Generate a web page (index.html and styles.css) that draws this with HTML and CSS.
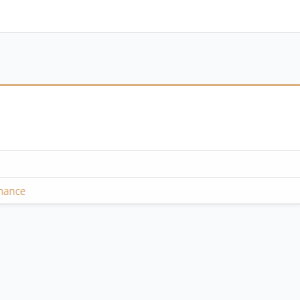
FILE: index.html
```html
<!DOCTYPE html>
<html lang="en">
<head>
    <meta charset="UTF-8">
    <link rel="stylesheet" href="styles.css">
    <title>Settings</title>
</head>
<body>
    <div class="topbar"></div>
    <div class="toolbar"></div>
    <div class="panel">
        <div class="panel-body"></div>
        <div class="row"></div>
        <div class="row row-link"><span class="link">Maintenance</span></div>
    </div>
    <div class="page-bg"></div>
</body>
</html>
```

FILE: styles.css
```css
html, body {
    margin: 0;
    padding: 0;
    height: 100%;
}

body {
    font-family: "Open Sans", "Liberation Sans", sans-serif;
    font-size: 10px;
    color: #333;
    background: #f9fafb;
    overflow: hidden;
}

.topbar {
    height: 32px;
    background: #fff;
    border-bottom: 1px solid #e8e8e8;
}

.toolbar {
    height: 51px;
    background: #f9fafb;
    border-bottom: 2px solid #dcb07f;
}

.panel {
    background: #fff;
    border-bottom: 1px solid #ececec;
    box-shadow: 0 1px 3px rgba(0, 0, 0, 0.05);
}

.panel-body {
    height: 64px;
    border-bottom: 1px solid #ececec;
}

.row {
    height: 26px;
    background: #fefefe;
    border-bottom: 1px solid #ececec;
}

.row-link {
    height: 25px;
    display: flex;
    align-items: center;
    overflow: hidden;
}

.link {
    margin-left: -35px;
    color: #d9a26b;
    white-space: nowrap;
}
```
